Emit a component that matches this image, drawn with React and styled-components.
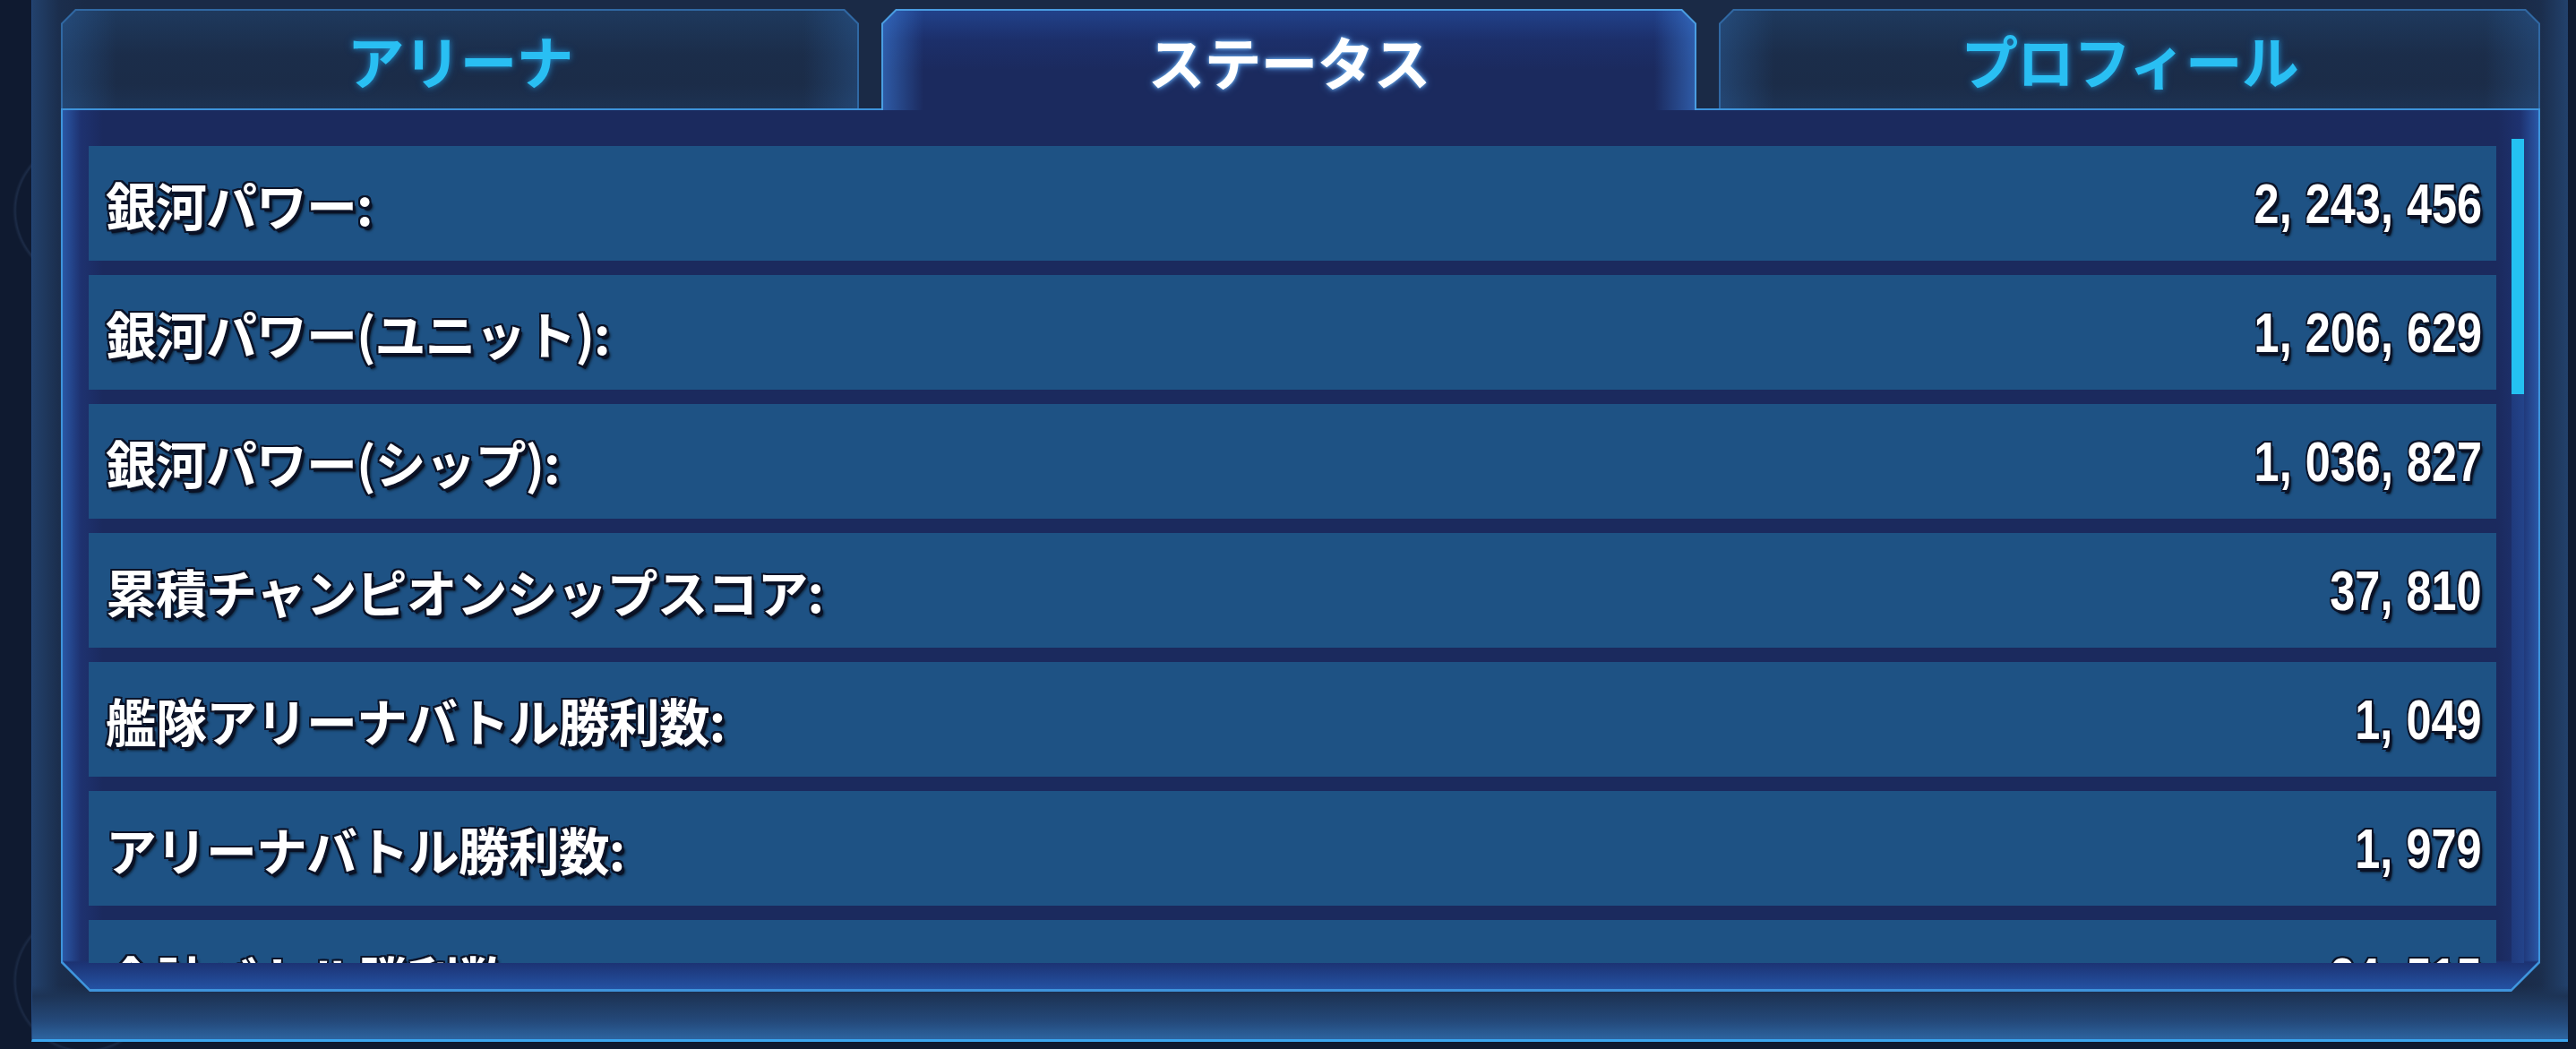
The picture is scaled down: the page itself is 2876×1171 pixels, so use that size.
import React from "react";
import styled, { createGlobalStyle } from "styled-components";

const GlobalStyle = createGlobalStyle`
  html, body {
    margin: 0;
    padding: 0;
  }
  body {
    width: 2876px;
    height: 1171px;
    overflow: hidden;
    background:
      radial-gradient(circle at 95px 235px, transparent 76px, rgba(110,150,210,0.14) 78px, transparent 81px),
      radial-gradient(circle at 95px 1095px, transparent 76px, rgba(110,150,210,0.12) 78px, transparent 81px),
      #0f1a30;
    font-family: "Noto Sans CJK JP", "Noto Sans", sans-serif;
  }
`;

const Frame = styled.div`
  box-sizing: border-box;
  margin-left: 35px;
  width: 2832px;
  height: 1163px;
  padding: 10px 31px 0 32px;
  display: flex;
  flex-direction: column;
  border-left: 1px solid #23467a;
  border-bottom: 3px solid #3ba6ef;
  background:
    linear-gradient(180deg, rgba(0,0,0,0) 0, rgba(0,0,0,0) 1100px, #1d3456 1112px, #24497a 1140px, #2d64a0 1160px),
    linear-gradient(90deg, #22416c 0, #1b2e4d 30px, #1a2a46 60px, #1a2a46 calc(100% - 60px), #1b2e4d calc(100% - 30px), #22416c 100%);
`;

const TabBar = styled.div`
  display: grid;
  grid-template-columns: 891px 910px 1fr;
  column-gap: 25px;
  height: 111px;
  position: relative;
  z-index: 2;
`;

const Tab = styled.div`
  position: relative;
  display: flex;
  align-items: center;
  justify-content: center;
  height: ${(p) => (p.$active ? "113px" : "111px")};
  clip-path: polygon(0 16px, 16px 0, calc(100% - 16px) 0, 100% 16px, 100% 100%, 0 100%);
  background: ${(p) => (p.$active ? "#4a9de2" : "#3068a3")};

  &::before {
    content: "";
    position: absolute;
    inset: 2px 2px 0 2px;
    clip-path: polygon(0 15px, 15px 0, calc(100% - 15px) 0, 100% 15px, 100% 100%, 0 100%);
    background: ${(p) =>
      p.$active
        ? `linear-gradient(90deg, rgba(62,130,225,0.55) 0, rgba(62,130,225,0) 45px, rgba(62,130,225,0) calc(100% - 45px), rgba(62,130,225,0.55) 100%),
           linear-gradient(180deg, #21418a 0, #1c2f6a 30%, #1b2a5e 60%, #1b2a5e 100%)`
        : `linear-gradient(90deg, rgba(44,96,158,0.45) 0, rgba(44,96,158,0) 60px, rgba(44,96,158,0) calc(100% - 60px), rgba(44,96,158,0.4) 100%),
           linear-gradient(180deg, #1e395d 0, #1b2d4a 45%, #1b2c48 75%, #1d3252 100%)`};
  }
`;

const TabLabel = styled.span`
  position: relative;
  z-index: 1;
  font-family: "Noto Sans CJK JP", "Noto Sans", sans-serif;
  font-weight: 700;
  font-size: 64px;
  line-height: 1;
  letter-spacing: -1px;
  color: ${(p) => (p.$active ? "#ffffff" : "#29bff3")};
  text-shadow: ${(p) =>
    p.$active
      ? "0 0 4px #7ec4ff, 0 0 10px rgba(90,165,255,0.8)"
      : "0 0 6px rgba(40,185,255,0.55), 0 0 12px rgba(40,160,255,0.3)"};
`;

const Panel = styled.div`
  position: relative;
  z-index: 1;
  box-sizing: border-box;
  height: 986px;
  padding: 2px 2px 3px 2px;
  background: #3e94dc;
  clip-path: polygon(0 0, 100% 0, 100% calc(100% - 32px), calc(100% - 32px) 100%, 32px 100%, 0 calc(100% - 32px));
`;

const PanelInner = styled.div`
  height: 100%;
  display: flex;
  flex-direction: column;
  clip-path: polygon(0 0, 100% 0, 100% calc(100% - 31px), calc(100% - 31px) 100%, 31px 100%, 0 calc(100% - 31px));
  background:
    linear-gradient(180deg, rgba(0,0,0,0) 0, rgba(0,0,0,0) calc(100% - 32px), #1c3272 calc(100% - 30px), #2452a3 100%),
    linear-gradient(90deg, #2a57a6 0, #1e3270 20px, #1b2a5e 45px, #1b2a5e calc(100% - 45px), #1e3270 calc(100% - 20px), #2a57a6 100%);
`;

const Body = styled.div`
  display: flex;
  height: 920px;
  margin-top: 32px;
  padding: 0 16px 0 29px;
`;

const RowList = styled.div`
  flex: 1;
  margin-top: 8px;
  display: flex;
  flex-direction: column;
  gap: 16px;
  overflow: hidden;
`;

const Row = styled.div`
  flex-shrink: 0;
  height: 128px;
  display: flex;
  align-items: center;
  justify-content: space-between;
  padding: 0 16px 0 19px;
  background: #1e5284;
`;

const outline =
  "-2px -2px 0 #0b1328, 2px -2px 0 #0b1328, -2px 2px 0 #0b1328, 2px 2px 0 #0b1328, 0 -2px 0 #0b1328, 0 2px 0 #0b1328, -2px 0 0 #0b1328, 2px 0 0 #0b1328, 3px 4px 0 #0a1124, 4px 5px 3px rgba(0,0,0,0.6)";

const Label = styled.span`
  font-family: "Noto Sans CJK JP", "Noto Sans", sans-serif;
  font-weight: 700;
  font-size: 57px;
  line-height: 1;
  letter-spacing: -1px;
  color: #ffffff;
  text-shadow: ${outline};
  white-space: nowrap;
`;

const Value = styled.span`
  display: inline-block;
  transform: scaleX(0.8);
  transform-origin: right center;
  font-family: "Liberation Sans", Arial, sans-serif;
  font-weight: 700;
  font-size: 63px;
  line-height: 1;
  color: #ffffff;
  text-shadow: ${outline};
  white-space: nowrap;
`;

const Comma = styled.span`
  margin-right: 0.3em;
`;

const Track = styled.div`
  width: 14px;
  margin-left: 17px;
  flex-shrink: 0;
  background: linear-gradient(90deg, #1f3a7c, #23438a);
  display: flex;
  flex-direction: column;
`;

const Thumb = styled.div`
  height: 285px;
  background: #24c1f2;
`;

const Footer = styled.div`
  flex: 1;
`;

const tabs = [
  { label: "アリーナ" },
  { label: "ステータス", active: true },
  { label: "プロフィール" },
];

const stats = [
  { label: "銀河パワー:", value: "2,243,456" },
  { label: "銀河パワー(ユニット):", value: "1,206,629" },
  { label: "銀河パワー(シップ):", value: "1,036,827" },
  { label: "累積チャンピオンシップスコア:", value: "37,810" },
  { label: "艦隊アリーナバトル勝利数:", value: "1,049" },
  { label: "アリーナバトル勝利数:", value: "1,979" },
  { label: "合計バトル勝利数:", value: "24,515" },
];

function NumberText({ value }) {
  const parts = value.split(",");
  return (
    <Value>
      {parts.map((part, i) => (
        <React.Fragment key={i}>
          {part}
          {i < parts.length - 1 && <Comma>,</Comma>}
        </React.Fragment>
      ))}
    </Value>
  );
}

export default function App() {
  return (
    <>
      <GlobalStyle />
      <Frame>
        <TabBar>
          {tabs.map((t) => (
            <Tab key={t.label} $active={t.active}>
              <TabLabel $active={t.active}>{t.label}</TabLabel>
            </Tab>
          ))}
        </TabBar>
        <Panel>
          <PanelInner>
            <Body>
              <RowList>
                {stats.map((s) => (
                  <Row key={s.label}>
                    <Label>{s.label}</Label>
                    <NumberText value={s.value} />
                  </Row>
                ))}
              </RowList>
              <Track>
                <Thumb />
              </Track>
            </Body>
            <Footer />
          </PanelInner>
        </Panel>
      </Frame>
    </>
  );
}
